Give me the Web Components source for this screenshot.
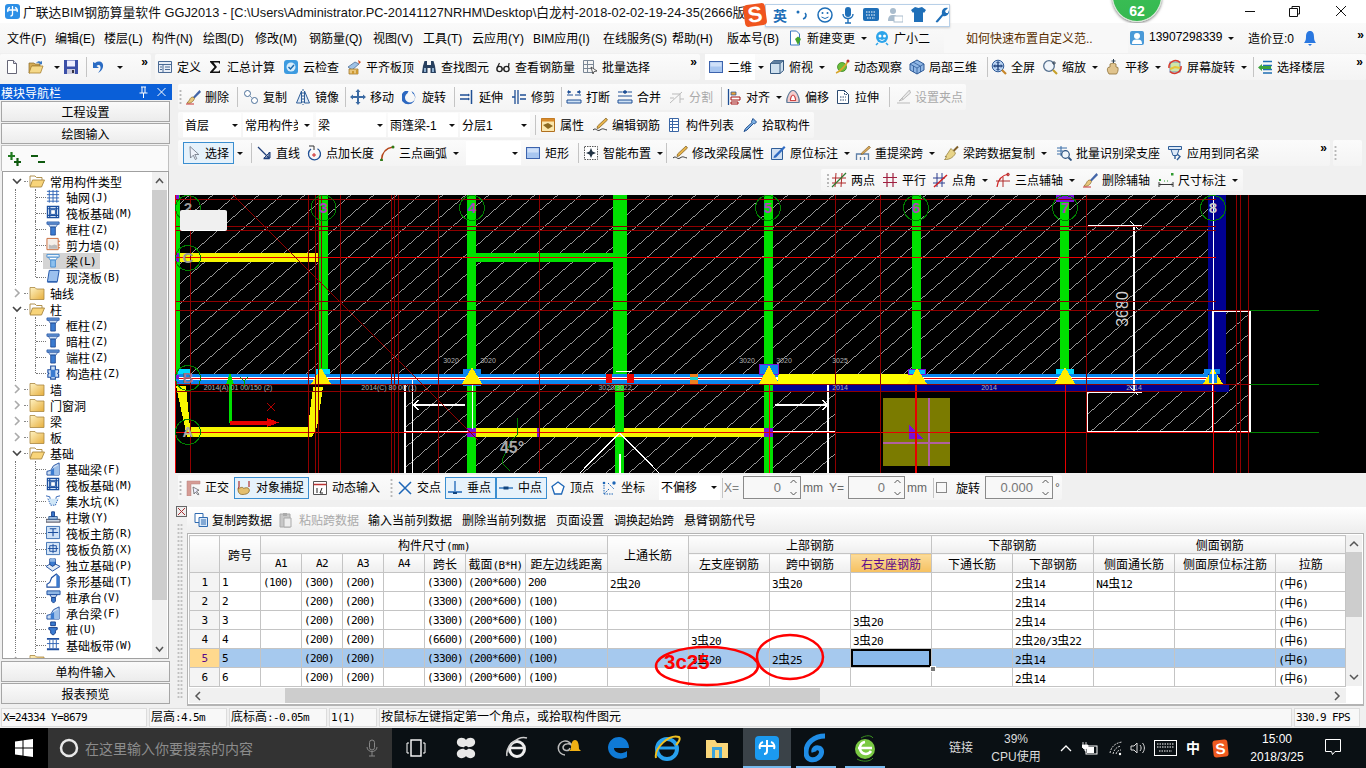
<!DOCTYPE html>
<html lang="zh">
<head>
<meta charset="utf-8">
<title>GGJ2013</title>
<style>
html, body { margin: 0; padding: 0; background: #f0f0f0; overflow: hidden; }
</style>
</head>
<body>
<gl-app>
    <gl-titlebar></gl-titlebar>
    <gl-menubar></gl-menubar>
    <gl-row gap="4" h="26" mt="1">
        <gl-toolbar w="151" pl="4">
            <gl-tool icon="new" w="24"></gl-tool>
            <gl-tool icon="open" w="35" arrow></gl-tool>
            <gl-tool icon="save" w="18"></gl-tool>
            <gl-sep w="10"></gl-sep>
            <gl-tool icon="undo" w="34" arrow></gl-tool>
            <gl-more></gl-more>
        </gl-toolbar>
        <gl-toolbar w="545" pl="2">
            <gl-tool icon="define" w="50">定义</gl-tool>
            <gl-tool icon="sigma" w="76">汇总计算</gl-tool>
            <gl-tool icon="cloud" w="63">云检查</gl-tool>
            <gl-tool icon="level" w="75">平齐板顶</gl-tool>
            <gl-tool icon="binoc" w="74">查找图元</gl-tool>
            <gl-tool icon="glasses" w="87">查看钢筋量</gl-tool>
            <gl-tool icon="batch" w="70">批量选择</gl-tool>
            <gl-more></gl-more>
        </gl-toolbar>
        <gl-toolbar w="661" pl="0" style="margin-left:1px">
            <gl-tool icon="square" w="50" white>二维</gl-tool>
            <gl-caret w="14"></gl-caret>
            <gl-tool icon="box" w="65" arrow>俯视</gl-tool>
            <gl-tool icon="orbit" w="75">动态观察</gl-tool>
            <gl-tool icon="cube" w="75">局部三维</gl-tool>
            <gl-sep w="7"></gl-sep>
            <gl-tool icon="zoomall" w="51">全屏</gl-tool>
            <gl-tool icon="zoom" w="63" arrow>缩放</gl-tool>
            <gl-tool icon="hand" w="62" arrow>平移</gl-tool>
            <gl-tool icon="spin" w="83" arrow>屏幕旋转</gl-tool>
            <gl-sep w="7"></gl-sep>
            <gl-tool icon="floors" w="70">选择楼层</gl-tool>
            <gl-more></gl-more>
        </gl-toolbar>
    </gl-row>
    <gl-work>
        <gl-nav slot="nav"></gl-nav>
        <gl-toolbar h="26" w="788" grip>
            <gl-tool icon="erase" w="47">删除</gl-tool>
            <gl-sep w="11"></gl-sep>
            <gl-tool icon="copy" w="52">复制</gl-tool>
            <gl-tool icon="mirror" w="46">镜像</gl-tool>
            <gl-sep w="9"></gl-sep>
            <gl-tool icon="move" w="52">移动</gl-tool>
            <gl-tool icon="rotate" w="48">旋转</gl-tool>
            <gl-sep w="9"></gl-sep>
            <gl-tool icon="extend" w="52">延伸</gl-tool>
            <gl-tool icon="trim" w="46">修剪</gl-tool>
            <gl-sep w="9"></gl-sep>
            <gl-tool icon="brk" w="51">打断</gl-tool>
            <gl-tool icon="merge" w="52">合并</gl-tool>
            <gl-tool icon="split" w="47" off>分割</gl-tool>
            <gl-sep w="10"></gl-sep>
            <gl-tool icon="align" w="59" arrow>对齐</gl-tool>
            <gl-tool icon="offset" w="50">偏移</gl-tool>
            <gl-tool icon="stretch" w="49">拉伸</gl-tool>
            <gl-sep w="11"></gl-sep>
            <gl-tool icon="grippt" w="70" off>设置夹点</gl-tool>
        </gl-toolbar>
        <gl-toolbar h="26" w="636" mt="2" pl="5">
            <gl-combo w="58">首层</gl-combo>
            <gl-combo w="70" ml="2">常用构件类型</gl-combo>
            <gl-combo w="70" ml="3">梁</gl-combo>
            <gl-combo w="70" ml="2">雨篷梁-1</gl-combo>
            <gl-combo w="70" ml="2">分层1</gl-combo>
            <gl-sep w="10"></gl-sep>
            <gl-tool icon="props" w="52">属性</gl-tool>
            <gl-tool icon="pencil" w="74">编辑钢筋</gl-tool>
            <gl-tool icon="list" w="76">构件列表</gl-tool>
            <gl-tool icon="dropper" w="70">拾取构件</gl-tool>
        </gl-toolbar>
        <gl-row h="26" mt="2">
            <gl-toolbar h="26" w="1152" pl="5">
                <gl-tool icon="cursor" w="51" on>选择</gl-tool>
                <gl-caret w="12"></gl-caret>
                <gl-sep w="10"></gl-sep>
                <gl-tool icon="line" w="50">直线</gl-tool>
                <gl-tool icon="ptlen" w="73">点加长度</gl-tool>
                <gl-tool icon="arc" w="87" arrow>三点画弧</gl-tool>
                <gl-combo w="55"></gl-combo>
                <gl-sep w="4" blank></gl-sep>
                <gl-tool icon="square" w="48">矩形</gl-tool>
                <gl-sep w="10"></gl-sep>
                <gl-tool icon="smart" w="78" arrow>智能布置</gl-tool>
                <gl-sep w="11"></gl-sep>
                <gl-tool icon="pencil" w="98">修改梁段属性</gl-tool>
                <gl-tool icon="note" w="85" arrow>原位标注</gl-tool>
                <gl-tool icon="respan" w="88" arrow>重提梁跨</gl-tool>
                <gl-tool icon="broom" w="113" arrow>梁跨数据复制</gl-tool>
                <gl-tool icon="detect" w="111">批量识别梁支座</gl-tool>
                <gl-tool icon="apply" w="92">应用到同名梁</gl-tool>
                <gl-more></gl-more>
            </gl-toolbar>
            <gl-toolbar h="26" w="29" ml="3" grip></gl-toolbar>
        </gl-row>
        <gl-toolbar h="22" w="422" mt="3" ml="643" grip="10">
            <gl-tool icon="axis2" w="51">两点</gl-tool>
            <gl-tool icon="axisp" w="50">平行</gl-tool>
            <gl-tool icon="axisa" w="63" arrow>点角</gl-tool>
            <gl-tool icon="axisc" w="87" arrow>三点辅轴</gl-tool>
            <gl-tool icon="erase" w="76">删除辅轴</gl-tool>
            <gl-tool icon="dim" w="84" arrow>尺寸标注</gl-tool>
        </gl-toolbar>
        <gl-canvas></gl-canvas>
        <gl-toolbar h="25" w="884" mt="2" grip>
            <gl-tool icon="ortho" w="49">正交</gl-tool>
            <gl-tool icon="snap" w="75" on>对象捕捉</gl-tool>
            <gl-sep w="3" blank></gl-sep>
            <gl-tool icon="dyn" w="73">动态输入</gl-tool>
            <gl-sep w="12" dots></gl-sep>
            <gl-tool icon="cross" w="48">交点</gl-tool>
            <gl-tool icon="perp" w="51" on>垂点</gl-tool>
            <gl-tool icon="midp" w="51" on>中点</gl-tool>
            <gl-sep w="3" blank></gl-sep>
            <gl-tool icon="vertex" w="51">顶点</gl-tool>
            <gl-tool icon="coord" w="50">坐标</gl-tool>
            <gl-combo w="61" ml="8">不偏移</gl-combo>
            <gl-sep w="4"></gl-sep>
            <gl-label c="#808080" w="19">X=</gl-label>
            <gl-spin w="58">0</gl-spin>
            <gl-label c="#666" w="28" pl="2">mm</gl-label>
            <gl-label c="#666" w="19">Y=</gl-label>
            <gl-spin w="57">0</gl-spin>
            <gl-label c="#666" w="25" pl="2">mm</gl-label>
            <gl-sep w="6"></gl-sep>
            <gl-check></gl-check>
            <gl-label w="37" pl="9">旋转</gl-label>
            <gl-spin w="68" ml="1">0.000</gl-spin>
            <gl-label c="#555" w="8" pl="2">°</gl-label>
        </gl-toolbar>
        <gl-panel></gl-panel>
    </gl-work>
    <gl-statusbar></gl-statusbar>
    <gl-taskbar></gl-taskbar>
</gl-app>
<script>
const ICONS = {
    new: `<path d="M3.5 1.5h6l3 3v10h-9z" fill="#fff" stroke="#667"/><path d="M9.5 1.5v3h3" fill="#dde" stroke="#667"/>`,
    open: `<path d="M1 4h5l1 1h5v2H4l-2 7H1z" fill="#d4ab55" stroke="#8a6a2a" stroke-width=".7"/><path d="M3.5 7H15l-2.5 7H1z" fill="#f5d98a" stroke="#a8802f" stroke-width=".8"/><path d="M8 4c1.500-2 3.500-2.400 5-1.200l1-1v3.400h-3.200l1-1C11 3.500 9.500 3.500 8 4z" fill="#3a78c2"/>`,
    save: `<path d="M1 1h14v14H1z" fill="#3b4fa8"/><path d="M4 1.500h8v6H4z" fill="#eef"/><path d="M4 10h8v5H4z" fill="#ccd"/><path d="M9 11h2v3H9z" fill="#334"/>`,
    undo: `<path d="M4 4c4-3 9-1 8 4-.6 3-3 5-5 6 1.500-2 3-4 2.500-6C9 5.500 7 5.500 5.500 7L8 9H2V3z" fill="#2b6cc4"/>`,
    define: `<path d="M1.500 2.500h13v11h-13z" fill="#e8eef7" stroke="#4a6a95"/><path d="M1.500 5.500h13M6 5.500v8M3 8h2M3 10.500h2M8 8h5M8 10.500h5" stroke="#4a6a95" fill="none"/>`,
    sigma: `<path d="M3 2h10v3l-1.500-1.500H6.500L10 8l-4 4.500h5.500L13 11v3H3v-1l4.500-5L3 3z" fill="#111"/>`,
    cloud: `<rect x="1" y="1" width="14" height="14" rx="3" fill="#3d9be0"/><circle cx="8" cy="8" r="4.500" fill="#d6ecfb"/><path d="M5.500 8l2 2 3.500-4" stroke="#1c6bb0" stroke-width="1.500" fill="none"/>`,
    level: `<path d="M2 8l7-5 4 2-7 6z" fill="#9fc2e6" stroke="#40628c" stroke-width=".7"/><path d="M3 10h9v5H3z" fill="#e9c57a" stroke="#9a6b1a" stroke-width=".7"/><path d="M6 12h2v3H6zM10 11h2v4h-2z" fill="#c93"/><path d="M12 1l3 2-2 2z" fill="#d64a1e"/>`,
    binoc: `<path d="M2 7l1.500-5h2.500v4h4V2h2.500L14 7l1 7H9.500V9h-3v5H1z" fill="#28405f"/><path d="M3 9h2v4H3zM11 9h2v4h-2z" fill="#8fb0d0"/>`,
    glasses: `<circle cx="4.500" cy="10" r="2.600" fill="none" stroke="#222" stroke-width="1.400"/><circle cx="11.500" cy="10" r="2.600" fill="none" stroke="#222" stroke-width="1.400"/><path d="M7 10h2M2.500 8l2-4M13.500 8l.5-4" stroke="#222" stroke-width="1.200" fill="none"/>`,
    batch: `<path d="M1.500 1.500h10v12h-10zM1.500 5.500h10M1.500 9.500h10M5.500 1.500v12" fill="#f5f5f5" stroke="#7a8796"/><path d="M9 8l6 4-3 .5L11 15z" fill="#fff" stroke="#333" stroke-width=".8"/>`,
    square: `<rect x="1.500" y="2.500" width="13" height="11" fill="#a8c6f0" stroke="#3c63ad"/><rect x="2.500" y="3.500" width="11" height="4" fill="#cfe0f8"/>`,
    box: `<path d="M5 1.500h9.500v10L11 14.500H1.500v-10z" fill="#cfe0ee" stroke="#35587f"/><path d="M1.500 4.500H11v10M11 4.500l3.500-3" fill="none" stroke="#35587f"/><path d="M5 1.500h9.500L11 4.500H1.500z" fill="#5f7f9f"/>`,
    orbit: `<circle cx="8" cy="8" r="4.500" fill="#6bbf3a" stroke="#2f7a16" stroke-width=".7"/><path d="M2 14C5 13 12 7 14 2" stroke="#d8a62a" stroke-width="1.800" fill="none"/><circle cx="14" cy="2" r="1.500" fill="#b33"/>`,
    cube: `<path d="M8 1l7 4v6l-7 4-7-4V5z" fill="#8fb6e4" stroke="#2f5b98"/><path d="M1 5l7 4 7-4M8 9v6M4 3l7 4M4.500 7v6M11.500 7v6" stroke="#2f5b98" fill="none" stroke-width=".8"/>`,
    zoomall: `<circle cx="7" cy="7" r="5.800" fill="#b9d3f2" stroke="#2f5b98"/><path d="M7 3v8M3 7h8" stroke="#1c3f7a" stroke-width="1.300"/><path d="M5.500 4L7 2.500 8.500 4M5.500 10L7 11.500 8.500 10M4 5.500L2.500 7 4 8.500M10 5.500L11.500 7 10 8.500" fill="none" stroke="#1c3f7a"/><path d="M11 11l4 4" stroke="#c6862a" stroke-width="2.200"/>`,
    zoom: `<circle cx="7" cy="7" r="5.300" fill="#f0f5fb" stroke="#55708f" stroke-width="1.300"/><path d="M11 11l4 4" stroke="#c6a02a" stroke-width="2.200"/><path d="M12 2v4M10 4h4" stroke="#345" stroke-width=".9"/>`,
    hand: `<path d="M4 15C2 12 2 10 3 8.500l2-.5V5l1.500-.5L8 4l1.500.5L11 5v3l2 .5c.5 3-.5 5-1.500 6.500z" fill="#e0c48e" stroke="#8f7137" stroke-width=".8"/><path d="M8.500 0v4M6.500 2h4" stroke="#345" stroke-width="1"/>`,
    spin: `<rect x="3" y="3" width="10" height="10" fill="#cfe6a8" stroke="#6a8fbf"/><path d="M3 10l5-2 5 1" stroke="#e8c43a" stroke-width="2" fill="none"/><path d="M2 9A6.500 6.500 0 0 1 13 3.500M14 7a6.500 6.500 0 0 1-11 5.500" fill="none" stroke="#d83b2b" stroke-width="1.500"/>`,
    floors: `<path d="M6 2.500h9M6 6.500h9M6 10.500h9M6 14h9" stroke="#1f6fb3" stroke-width="1.700"/><path d="M1 8.500L5 5v2h9v3H5v2z" fill="#3ca33c"/>`,
    erase: `<path d="M14.500 1L8 8l1.500 1.500L16 3z" fill="#4466a8"/><path d="M8 8c-1.500 0-3 1-3.500 3L2 14c3 .7 6-.5 7.500-4.500z" fill="#e9c77c" stroke="#8a6a2a" stroke-width=".7"/><path d="M1 15h8" stroke="#c33" stroke-width="1"/>`,
    copy: `<circle cx="4.500" cy="4.500" r="3" fill="#fff" stroke="#4b6f99"/><circle cx="11.500" cy="11.500" r="3" fill="#fff" stroke="#4b6f99"/><path d="M7 7l2 2" stroke="#4b6f99" stroke-dasharray="1 1"/>`,
    mirror: `<path d="M6.500 2v12h-5zM9.500 2v12h5z" fill="#dfeaf7" stroke="#2f5e98"/><path d="M8 0v16" stroke="#2f5e98" stroke-dasharray="2 1"/>`,
    move: `<path d="M8 0l2.500 3H9v4h4V5.500L16 8l-3 2.500V9H9v4h1.500L8 16l-2.500-3H7V9H3v1.500L0 8l3-2.500V7h4V3H5.500z" fill="#3b6aa3"/>`,
    rotate: `<path d="M3 2h3.500l-1 2.200a5 5 0 1 0 5 0L9.500 2A7 7 0 1 1 3 2z" fill="#2d68c0"/>`,
    extend: `<path d="M12.500 1v14M1 6h8M1 10h8" stroke="#1f4f95" stroke-width="1.500" fill="none"/><path d="M9 4.500l2 1.500-2 1.500zM9 8.500l2 1.500-2 1.500z" fill="#1f4f95"/>`,
    trim: `<path d="M4 1v14M7 1v14M1 8h3M9 6h6M9 10h6" stroke="#1f4f95" stroke-width="1.300" fill="none"/>`,
    brk: `<path d="M1 11h14v3H1zM1 6h6M9 6h6" fill="#cfe2f5" stroke="#1f4f95"/><path d="M5 3L2 1v4zM11 3l3-2v4z" fill="#1f4f95"/><path d="M1 3h4M11 3h4" stroke="#1f4f95"/>`,
    merge: `<path d="M1 11h14v3H1z" fill="#cfe2f5" stroke="#1f4f95"/><path d="M1 7h14" stroke="#1f4f95"/><path d="M5 3L8 5V1zM11 3L8 5V1z" fill="#1f4f95"/><path d="M1 3h4M11 3h4" stroke="#1f4f95"/>`,
    split: `<path d="M1 14L13 3M3 5h8v9M1 9h4M11 10h4" stroke="#bbb" fill="none"/>`,
    align: `<path d="M2.500 0v16" stroke="#1f4f95" stroke-width="1.300"/><path d="M5 3h5v3H5z" fill="#e8a33a" stroke="#1f4f95" stroke-width=".7"/><path d="M5 8h9v3H5zM5 13h7v2H5z" fill="#fff" stroke="#a01010"/>`,
    offset: `<path d="M8 1.500c4 0 7 9 6 12H2c-1-3 2-12 6-12z" fill="#f4cdcd" stroke="#5d7c99" stroke-width="1.200"/><path d="M8 6c1.500 0 3 4 2.500 5.500h-5C5 10 6.500 6 8 6z" fill="#fff" stroke="#c44" stroke-width="1.200"/>`,
    stretch: `<path d="M2.500 1.500h7l4 4v9h-11z" fill="#fff" stroke="#2c4a70" /><path d="M9.500 1.500v4h4M5 8h6M5 11h6" fill="none" stroke="#2c4a70" stroke-dasharray="1.500 1"/>`,
    grippt: `<path d="M2 14h13M14.500 1L7 9l1 1.500L15.500 4zM7 9l-3 3 4-1.500" stroke="#bbb" fill="#e8e8e8"/>`,
    props: `<path d="M1.500 1.500h13v13h-13z" fill="#fbe7ae" stroke="#b06f1e"/><path d="M1.500 1.500h13v3h-13z" fill="#d98b2b"/><path d="M3 8l5-2 5 3-5 3z" fill="#8d6a22"/>`,
    pencil: `<path d="M14 1l1.500 2L7 11 5 11.500 5.500 9z" fill="#e7b34a" stroke="#7a5a20" stroke-width=".7"/><path d="M1 13c3-3 4 2 7 0s3-1 7 0" stroke="#333" fill="none"/>`,
    list: `<path d="M3.500 1.500h9v13h-9z" fill="#fff" stroke="#3a66a5"/><path d="M3.500 4.500h9M3.500 7.500h9M3.500 10.500h9M6.500 1.500v13" stroke="#3a66a5"/>`,
    dropper: `<path d="M11 1.500l3.500 3.500-2 2-1-.5L5 13l-3 1.500L3.500 11.500 10 5.500 9.500 4.500z" fill="#7db1e4" stroke="#214f8f"/>`,
    cursor: `<path d="M5 1.500L5.500 13l2.800-2.800 2 4.300 1.500-.8-2-4.200h4z" fill="#eef3fb" stroke="#6b7280" stroke-width=".8"/>`,
    line: `<path d="M2 2l11 11" stroke="#1f3f7a" stroke-width="1.300"/><path d="M8 13h6V7z" fill="none" stroke="#1f3f7a"/><path d="M13 7.500v6H7.500" stroke="#1f3f7a" fill="none" stroke-width="1.300"/>`,
    ptlen: `<path d="M5 4a6 6 0 1 0 6.500-.3" fill="none" stroke="#1f4f95" stroke-width="1.300"/><path d="M3 1h5v4" fill="none" stroke="#333"/><path d="M8 8v4M6 10h4" stroke="#c22"/>`,
    arc: `<path d="M2.500 15C3 8 7 3 14 2" fill="none" stroke="#b5461a" stroke-width="1.500"/><circle cx="14" cy="2" r="1.500" fill="#2f7a16"/><circle cx="2.500" cy="15" r="1.500" fill="#2f7a16"/>`,
    smart: `<path d="M1.500 1.500h13v13h-13z" fill="#fff" stroke="#555" stroke-dasharray="1.500 1"/><path d="M8 3l1.500 3.500L13 8l-3.500 1.500L8 13l-1.500-3.500L3 8l3.500-1.500z" fill="#234"/>`,
    note: `<path d="M1.500 3.500h11v11h-11z" fill="#cfdff2" stroke="#2f5e98"/><path d="M4 11L14 1l1.500 1.500L6 12.500l-2.500.5z" fill="#2f6bc2"/>`,
    respan: `<path d="M1.500 15V9h12v6M5.500 15v-3M9.500 15v-3" fill="none" stroke="#5d7fa8" stroke-width="1.300"/><path d="M14 1l1.500 1.500L8 9 6 9.500 6.500 8z" fill="#d8a75a" stroke="#7a5a20" stroke-width=".6"/>`,
    broom: `<path d="M10.500 6L15 1.500" stroke="#7f5f2a" stroke-width="2"/><path d="M8 3.500l4.500 4.500c-1 3-5 7-11 6.500 1-1 2-2 2-3l-1.500.5C4 10 6 6 8 3.500z" fill="#e8d488" stroke="#8a7430" stroke-width=".7"/>`,
    detect: `<path d="M1 3h10M1 6h6M1 9h5M5 1v10" stroke="#3b6fa8"/><circle cx="9.500" cy="9.500" r="3.800" fill="#eef5fb" stroke="#28507f" stroke-width="1.200"/><path d="M12.500 12.500l3 3" stroke="#28507f" stroke-width="1.800"/>`,
    apply: `<path d="M1.500 1.500h13v3h-13zM4 4.500l2 6h4l2-6" fill="#dbe8f7" stroke="#2f5e98"/><path d="M10 9l3 2.500L10 15M8 10v4" fill="none" stroke="#2f5e98" stroke-width="1.400"/>`,
    axis2: `<path d="M1 6h14M1 11h14M5 1l-1 14M11 1l-1 14" stroke="#b02a2a" fill="none"/><path d="M1 15L15 1" stroke="#2f7a2f" stroke-width="1.200"/>`,
    axisp: `<path d="M1 5.500h14M1 10.500h14M5 1v14M11 1v14" stroke="#a02040" stroke-width="1.200" fill="none"/>`,
    axisa: `<path d="M1 6h12M1 11h12M5 1v14M10 1v14" stroke="#2c3e8f" fill="none"/><path d="M2 15L15 3" stroke="#d02020" stroke-width="1.500"/>`,
    axisc: `<path d="M2 15C3 7 7 3 14 2" fill="none" stroke="#d02020" stroke-width="1.200"/><path d="M1 9h14M8 5v10" stroke="#b02a2a"/><circle cx="13" cy="2.500" r="1.300" fill="none" stroke="#b02a2a"/>`,
    dim: `<path d="M1 10v5M15 10v5M1 12.500h14" stroke="#333" fill="none"/><path d="M1 12.500l2-1v2zM15 12.500l-2-1v2z" fill="#333"/><rect x="1" y="7" width="2" height="2" fill="#2f9a2f"/><rect x="13" y="1" width="2.500" height="2.500" fill="#2f9a2f"/><path d="M6 9h1M9 9h1" stroke="#2f9a2f"/>`,
    ortho: `<path d="M2 1h13v3H6v12H2z" fill="#d69c95" stroke="#b5827c" stroke-width=".5"/><path d="M8 7l1 7 1.500-2 2.500 3 1-.8-2.500-3 2.500-1z" fill="#eef" stroke="#555" stroke-width=".7"/>`,
    snap: `<path d="M3 1v6M3 7l-1 2M13 1v6" stroke="#b03030" stroke-width="1.200"/><path d="M2 9c3-2 5-2 5-1s3-1 5 0 2 5-2 6-8 1-8-5z" fill="#e4bf6e" stroke="#8a6a2a" stroke-width=".8"/>`,
    dyn: `<path d="M1.500 1.500h13v13h-13z" fill="#fff" stroke="#555"/><path d="M1.500 4.500h13" stroke="#b33" stroke-width="1.500"/><path d="M5 8v5M10 8l-2 5h3" stroke="#222" fill="none"/>`,
    cross: `<path d="M2 2l12 12M14 2L2 14" stroke="#1d66b7" stroke-width="1.500"/>`,
    perp: `<path d="M8 1v10M1 12h14" stroke="#1d66b7" stroke-width="1.300"/><path d="M6 12h4v2H6z" fill="#11457f"/>`,
    midp: `<path d="M1 8h14" stroke="#1d66b7" stroke-width="1.300"/><path d="M5.500 6.500h5v3h-5z" fill="#11457f"/>`,
    vertex: `<path d="M8 2l6 4.500-2.500 7.500h-7L2 6.500z" fill="#fff" stroke="#1d66b7" stroke-width="1.300"/>`,
    coord: `<path d="M3 14V3M3 14h10M8 9L3 14M7 3l6 6" stroke="#1d66b7" stroke-dasharray="1.500 1" fill="none"/><circle cx="13" cy="3" r="1.700" fill="#1d66b7"/><circle cx="3" cy="3" r="1.300" fill="#1d66b7"/>`,
    pastex: `<path d="M3 2h10v13H3z" fill="#c8c8c8" stroke="#aaa"/><path d="M6 1h4v3H6z" fill="#aaa"/><path d="M7 6h7v9H7z" fill="#eee" stroke="#aaa"/>`,
    copyx: `<path d="M2 1.500h8v9H2z" fill="#fff" stroke="#2f6ab0"/><path d="M6 5.500h8.500v9H6z" fill="#d9e8f8" stroke="#2f6ab0"/><path d="M8 8h5M8 10h5M8 12h5" stroke="#2f6ab0"/>`,
    plusplus: `<path d="M4.500 1v8M1 5h7" stroke="#207a20" stroke-width="2.200"/><path d="M10.500 7v8M7 11h7" stroke="#0f5a0f" stroke-width="2.200"/>`,
    minusminus: `<path d="M1 5h7M8 11h7" stroke="#0f5a0f" stroke-width="2.200"/>`,
    grid: `<path d="M1 2.500h13M1 6h13M1 9.500h13M1 13h13M3.500 1v13.500M7.500 1v13.500M11.500 1v13.500" stroke="#2f63b5" fill="none"/>`,
    raft: `<path d="M1.500 1.500h12v12h-12zM4 1.500v12M11 1.500v12M1.500 4h12M1.500 11h12" fill="#cfe0f5" stroke="#1b4f9f" stroke-width="1.300"/><path d="M5 5h5v5H5z" fill="#fff" stroke="#1b4f9f"/>`,
    col: `<path d="M1 1h13v2.500H1z" fill="#6a9bd8" stroke="#1f4fa0" stroke-width=".8"/><path d="M2.500 3.500h10L10.500 6.500h-6z" fill="#cfe0f5" stroke="#1f4fa0" stroke-width=".8"/><path d="M5 6.500h5V15H5z" fill="#3b7bd0" stroke="#163f8a" stroke-width=".8"/>`,
    wall: `<path d="M1 1.500h12v12H1z" fill="#f5efe9" stroke="#c86a3a"/><path d="M3 8l3 1 3-1 3 1v3.500H3z" fill="#bbb"/><path d="M14 4v1M14 8v1M14 11v1" stroke="#c86a3a" stroke-width="2"/>`,
    beam: `<path d="M1 1.500h13v3H1z" fill="#eaf3fb" stroke="#4a8ed0"/><path d="M2.500 4.500h10l-2 3h-6z" fill="#fff" stroke="#4a8ed0"/><path d="M5 7.500h5V15H5z" fill="#8cc0ee" stroke="#4a8ed0"/>`,
    slab: `<path d="M3.500 1.500h10.500l-2 12H1.500z" fill="#9cc1ee" stroke="#1c52a8"/><path d="M1.500 13.500h10.500v1H1.500z" fill="#1c52a8"/>`,
    gzz: `<path d="M5 1h5v4h3.500v3l-1 1 1 1v3H10v2H5v-2H2v-3l1-1-1-1V5h3z" fill="#cfe0f5" stroke="#1f4fa0" stroke-width="1.200"/><path d="M5 5h5v8H5z" fill="#3b7bd0"/>`,
    jcl: `<path d="M1 15V11l4-1 3-5 6-3v13z" fill="#cfe0f5" stroke="#1f4fa0"/><path d="M5 10l4-3v8H5z" fill="#3b7bd0"/><path d="M9 7l5-3v11H9z" fill="#9dbfe8"/>`,
    pit: `<path d="M0 3l4 1 1 5h5l1-5 4-1" fill="none" stroke="#2f63b5"/><path d="M2 6l3 7h5l3-7" fill="#cfe6f7" stroke="#2f63b5" stroke-dasharray="1.500 1"/>`,
    pier: `<path d="M0 11h15v3H0z" fill="#cdd7e3" stroke="#445"/><path d="M3 8h9v3H3z" fill="#9cbce0" stroke="#345f95"/><path d="M6 3h3v5H6z" fill="#3b7bd0" stroke="#163f8a"/>`,
    rmain: `<path d="M.5 1.500h14v13H.5z" fill="#cfe2f7" stroke="#3c6fb0"/><path d="M2 8h11M7.500 4v8M4 4h7" stroke="#1b4f9f" fill="none" stroke-width="1.200"/>`,
    rneg: `<path d="M.5 1.500h14v13H.5z" fill="#d6e6f8" stroke="#3c6fb0"/><path d="M2 8h11M7.500 3v10M4 5h7v6H4z" stroke="#1b4f9f" fill="none"/>`,
    iso: `<path d="M0 10l7-4 8 4-8 5z" fill="#e4ecf6" stroke="#1f4fa0"/><path d="M4 2h6v6l-3 2-3-2z" fill="#3b7bd0" stroke="#163f8a"/><path d="M4 2l3-1 3 1v3H4z" fill="#8fb6e4"/>`,
    strip: `<path d="M1 15v-3l3-2 2-5 5-4 3 3v11z" fill="#fff" stroke="#1f4fa0" stroke-width="1.200"/><path d="M11 1l3 3v11h-3z" fill="#3b7bd0"/>`,
    cap: `<path d="M1 2h14v4H1z" fill="#8fb6e4" stroke="#1f4fa0"/><path d="M4 6h8l-2 3H6z" fill="#cfe0f5" stroke="#1f4fa0"/><path d="M6 9h4v4l-2 2-2-2z" fill="#3b7bd0" stroke="#163f8a"/>`,
    pile: `<path d="M5 1h5v4H5zM3 7h9v2l-2 1v3l-2.500 2L5 13v-3L3 9z" fill="#3b7bd0" stroke="#163f8a"/>`,
    band: `<path d="M1 2h13M1 13h13" stroke="#1f4fa0" stroke-width="2"/><path d="M4 3v9M7.500 3v9M11 3v9M1 7h13" stroke="#2f63b5" fill="none"/>`,
    folder: `<path d="M1 4V2.500h5L7.500 4H15v10.500H1z" fill="url(#fy)" stroke="#a88740" stroke-width=".8"/><defs><linearGradient id="fy" x1="0" x2="1" y1="0" y2="1"><stop offset="0" stop-color="#fff3c4"/><stop offset="1" stop-color="#e6ae3c"/></linearGradient></defs>`,
    folderopen: `<path d="M1 13V3h5l1.500 1.500H13V7" fill="#fff" stroke="#a88740" stroke-width=".9"/><path d="M3.500 7H15.500l-3 7H1z" fill="#f8d479" stroke="#a88740" stroke-width=".9"/>`,
    phone: `<rect x="1" y="1" width="14" height="14" rx="2" fill="#4a9ad8"/><circle cx="8" cy="6" r="3" fill="#fff"/><path d="M3 14c0-4 2-4.500 5-4.500s5 .5 5 4.500z" fill="#fff"/>`,
    bell: `<path d="M8 1c3 0 4 2.500 4 6s1 4.500 2 6H2c1-1.500 2-2.500 2-6s1-6 4-6z" fill="#2a78e0"/><path d="M6 14h4l-2 2z" fill="#2a78e0"/>`,
    newchange: `<path d="M3.500 1h6l3 3v11h-9z" fill="#fff" stroke="#3a78c2"/><path d="M8 9l3-2.500L14 9l-3 6z" fill="#45a52e"/>`,
    xiaoer: `<circle cx="8" cy="7" r="6" fill="#2ca4ea"/><circle cx="6" cy="6" r="1.500" fill="#fff"/><circle cx="10.500" cy="6" r="1.500" fill="#fff"/><path d="M4 13l-2 2M12 13l2 2" stroke="#2ca4ea" stroke-width="1.500"/><path d="M5.500 9.500q2.500 2 5 0" stroke="#fff" fill="none"/>`
};

class GlIcon extends HTMLElement {
    connectedCallback() {
        this.root = this.attachShadow({ mode: "open" });
        let size = this.getAttribute("size") || 16;
        this.root.innerHTML = `
<style>
:host { display: inline-flex; flex: none; }
svg { display: block; }
</style>
<svg width="${size}" height="${size}" viewBox="0 0 16 16">${ICONS[this.getAttribute("name")] || ""}</svg>`;
    }
}
window.customElements.define("gl-icon", GlIcon);

class GlApp extends HTMLElement {
    connectedCallback() {
        this.root = this.attachShadow({ mode: "open" });
        this.root.innerHTML = `
<style>
:host {
    display: block;
    position: relative;
    width: 1366px;
    height: 768px;
    overflow: hidden;
    background: #f0f0f0;
    color: #000;
    font: 12px "Liberation Sans", "Noto Sans CJK SC", sans-serif;
}
</style>
<slot></slot>`;
    }
}
window.customElements.define("gl-app", GlApp);

class GlTitlebar extends HTMLElement {
    connectedCallback() {
        this.root = this.attachShadow({ mode: "open" });
        this.root.innerHTML = `
<style>
:host { display: flex; align-items: center; height: 23px; background: #fff; position: relative; font-size: 12.800px; }
.logo { margin: 0 3px 0 5px; }
.title { white-space: nowrap; overflow: hidden; width: 726px; color: #111; }
.ball {
    position: absolute; left: 1112px; top: -30px; width: 48px; height: 48px; border-radius: 50%;
    background: linear-gradient(#3dc25a, #35b84f); border: 1px solid #d8e8d8; box-shadow: 0 1px 3px #777;
    color: #fff; font: bold 14px "Liberation Sans", sans-serif; display: flex; align-items: flex-end; justify-content: center; padding-bottom: 2px; box-sizing: content-box;
}
.win { position: absolute; top: 0; height: 23px; display: flex; align-items: center; }
.sogou {
    position: absolute; left: 744px; top: 3px; height: 24px; width: 206px; z-index: 3;
    display: flex; align-items: center;
}
.s {
    position: relative; width: 22px; height: 22px; background: #f0551e; border-radius: 4px;
    color: #fff; font: bold 22px "Liberation Sans", sans-serif; text-align: center; line-height: 22px; z-index: 1; transform: rotate(-8deg);
}
.sb {
    margin-left: -1px; flex: 1; height: 23px; background: #fff; border: 1px solid #b8d0e8; box-shadow: 0 1px 2px #ccc;
    display: flex; align-items: center; gap: 8px; padding-left: 7px; box-sizing: border-box;
}
.ying { color: #1f6fb8; font-weight: bold; font-size: 14px; }
</style>
<svg class="logo" width="15" height="15" viewBox="0 0 15 15"><rect width="15" height="15" rx="3" fill="#2d8fe6"/><path d="M7.500 2v8a2 2 0 0 1-2 2M3 6h9M5 3.500C3 4 2 6 3 8M10 3.500c2 .5 3 2.500 2 4.500" stroke="#fff" stroke-width="1.300" fill="none"/></svg>
<div class="title">广联达BIM钢筋算量软件 GGJ2013 - [C:\\Users\\Administrator.PC-20141127NRHM\\Desktop\\白龙村-2018-02-02-19-24-35(2666版</div>
<div class="sogou">
    <div class="s">S</div>
    <div class="sb">
        <span class="ying">英</span>
        <svg width="14" height="16" viewBox="0 0 14 16"><circle cx="3" cy="5" r="1.500" fill="#1f6fb8"/><path d="M10 6c2 2 1 5-2 6" stroke="#1f6fb8" stroke-width="1.600" fill="none"/></svg>
        <svg width="16" height="16" viewBox="0 0 16 16"><circle cx="8" cy="8" r="7" fill="none" stroke="#1f6fb8" stroke-width="1.500"/><circle cx="5.500" cy="6" r="1" fill="#1f6fb8"/><circle cx="10.500" cy="6" r="1" fill="#1f6fb8"/><path d="M4.500 10q3.500 3 7 0" stroke="#1f6fb8" fill="none"/></svg>
        <svg width="14" height="18" viewBox="0 0 14 18"><rect x="4" y="1" width="6" height="10" rx="3" fill="#1f6fb8"/><path d="M2 8c0 6 10 6 10 0M7 13v4M4 17h6" stroke="#1f6fb8" stroke-width="1.400" fill="none"/></svg>
        <svg width="16" height="14" viewBox="0 0 16 14"><rect width="16" height="13" rx="2" fill="#1f6fb8"/><path d="M3 4h10M3 7h10M4 10h8" stroke="#fff" stroke-dasharray="1.500 1"/></svg>
        <svg width="16" height="16" viewBox="0 0 16 16"><circle cx="6" cy="4" r="3" fill="#a9bccd"/><path d="M1 14c0-5 2-6 5-6s5 1 5 6z" fill="#a9bccd"/><rect x="7" y="9" width="9" height="6" fill="#fff" stroke="#a9bccd"/></svg>
        <svg width="15" height="16" viewBox="0 0 15 16"><path d="M4 0l3.500 1L11 0l4 3-2 3-1-1v10H3V5L2 6 0 3z" fill="#1f6fb8"/></svg>
        <svg width="15" height="16" viewBox="0 0 15 16"><path d="M2 14L8 7C7 3 10 0 14 1l-3 3 1 2 2 0 1-3c1 4-3 7-6 6l-5 6c-1 1-3 0-2-1z" fill="#1f6fb8"/></svg>
    </div>
</div>
<div class="ball">62</div>
<svg class="win" style="left:1244px" width="12" height="23"><path d="M1 11.500h10" stroke="#111"/></svg>
<svg class="win" style="left:1289px" width="12" height="23"><path d="M.5 8.500h8v8h-8zM3 8V6.500h7.500V14H9" fill="none" stroke="#111"/></svg>
<svg class="win" style="left:1335px" width="12" height="23"><path d="M1 6l10 10M11 6L1 16" stroke="#111"/></svg>`;
    }
}
window.customElements.define("gl-titlebar", GlTitlebar);

class GlMenubar extends HTMLElement {
    connectedCallback() {
        this.root = this.attachShadow({ mode: "open" });
        let items = [["文件(F)", 48], ["编辑(E)", 49], ["楼层(L)", 48], ["构件(N)", 51], ["绘图(D)", 52], ["修改(M)", 54], ["钢筋量(Q)", 64],
            ["视图(V)", 50], ["工具(T)", 49], ["云应用(Y)", 61], ["BIM应用(I)", 70], ["在线服务(S)", 69], ["帮助(H)", 55], ["版本号(B)", 60]];
        this.root.innerHTML = `
<style>
:host { display: flex; align-items: center; height: 30px; padding-left: 7px; background: linear-gradient(#fafafa, #f4f4f4); position: relative; white-space: nowrap; }
span.m { flex: none; margin-bottom: 2px; }
.b { color: #5b3000; width: 184px; flex: none; background: #f8f8f8; height: 100%; display: flex; align-items: center; padding: 0 0 2px 22px; box-sizing: border-box; }
.more { position: absolute; right: 2px; top: 5px; font: bold 12px "Liberation Sans", sans-serif; }
</style>
${items.map((i) => `<span class="m" style="width:${i[1]}px">${i[0]}</span>`).join("")}
<gl-tool icon="newchange" w="87" arrow>新建变更</gl-tool>
<gl-tool icon="xiaoer" w="70">广小二</gl-tool>
<div class="b">如何快速布置自定义范..</div>
<gl-tool icon="phone" w="119" arrow style="margin-left:1px">13907298339</gl-tool>
<span class="m" style="width:54px">造价豆:0</span>
<gl-icon name="bell"></gl-icon>
<span class="more">»</span>`;
    }
}
window.customElements.define("gl-menubar", GlMenubar);

class GlRow extends HTMLElement {
    connectedCallback() {
        this.root = this.attachShadow({ mode: "open" });
        this.root.innerHTML = `
<style>
:host { display: flex; flex: none; gap: ${this.getAttribute("gap") || 0}px; height: ${this.getAttribute("h")}px; margin-top: ${this.getAttribute("mt") || 0}px; }
</style>
<slot></slot>`;
    }
}
window.customElements.define("gl-row", GlRow);

class GlToolbar extends HTMLElement {
    connectedCallback() {
        this.root = this.attachShadow({ mode: "open" });
        let grip = this.getAttribute("grip");
        let gripWidth = grip !== null ? (parseInt(grip) || 7) : 0;
        this.root.innerHTML = `
<style>
:host {
    display: flex;
    align-items: center;
    flex: none;
    box-sizing: border-box;
    width: ${this.getAttribute("w")}px;
    height: ${this.getAttribute("h") || 26}px;
    margin-top: ${this.getAttribute("mt") || 0}px;
    margin-left: ${this.getAttribute("ml") || 0}px;
    padding-left: ${this.getAttribute("pl") || 0}px;
    background: linear-gradient(#fbfbfb, #f4f4f4);
    border-radius: 2px;
    white-space: nowrap;
}
.grip { flex: none; width: ${gripWidth}px; height: 60%; background: radial-gradient(circle, #b8b8b8 1px, transparent 1.200px) ${gripWidth > 7 ? 2 : -1}px 0 / 100% 4px; }
</style>
${grip !== null ? '<div class="grip"></div>' : ""}<slot></slot>`;
    }
}
window.customElements.define("gl-toolbar", GlToolbar);

class GlTool extends HTMLElement {
    connectedCallback() {
        this.root = this.attachShadow({ mode: "open" });
        let icon = this.getAttribute("icon");
        this.style.width = this.getAttribute("w") + "px";
        this.root.innerHTML = `
<style>
:host { display: inline-flex; align-items: center; gap: 4px; flex: none; height: 100%; box-sizing: border-box; }
:host([white]) { background: #fff; padding-left: 3px; }
:host([off]) { color: #aaa; }
:host([on]) { height: 22px; padding-left: 1px; border: 1px solid #3a8ed0; background: #e6f2fb; }
.lb { margin-bottom: 2px; }
.arr { width: 0; height: 0; margin-left: 2px; border: 3px solid transparent; border-top: 3px solid #111; border-bottom: 0; flex: none; }
</style>
${icon ? `<gl-icon name="${icon}"></gl-icon>` : ""}<span class="lb"><slot></slot></span>${this.hasAttribute("arrow") ? '<i class="arr"></i>' : ""}`;
    }
}
window.customElements.define("gl-tool", GlTool);

class GlSep extends HTMLElement {
    connectedCallback() {
        this.root = this.attachShadow({ mode: "open" });
        let dots = this.hasAttribute("dots");
        this.root.innerHTML = `
<style>
:host { display: flex; justify-content: center; align-items: center; flex: none; height: 100%; width: ${this.getAttribute("w")}px; }
b { display: block; height: 20px; width: ${dots ? 3 : 1}px; background: ${dots ? "radial-gradient(circle, #b8b8b8 1px, transparent 1.200px) 0 0 / 100% 4px" : "#c4c4c4"}; }
</style>
${this.hasAttribute("blank") ? "" : "<b></b>"}`;
    }
}
window.customElements.define("gl-sep", GlSep);

class GlCaret extends HTMLElement {
    connectedCallback() {
        this.root = this.attachShadow({ mode: "open" });
        this.root.innerHTML = `
<style>
:host { display: flex; align-items: center; justify-content: flex-start; flex: none; height: 100%; width: ${this.getAttribute("w")}px; padding-left: 3px; box-sizing: border-box; }
i { width: 0; height: 0; border: 3px solid transparent; border-top: 3px solid #111; border-bottom: 0; }
</style>
<i></i>`;
    }
}
window.customElements.define("gl-caret", GlCaret);

class GlMore extends HTMLElement {
    connectedCallback() {
        this.root = this.attachShadow({ mode: "open" });
        this.root.innerHTML = `
<style>
:host { margin-left: auto; padding-right: 3px; align-self: flex-start; font: bold 12px "Liberation Sans", sans-serif; line-height: 17px; }
</style>
»`;
    }
}
window.customElements.define("gl-more", GlMore);

class GlCombo extends HTMLElement {
    connectedCallback() {
        this.root = this.attachShadow({ mode: "open" });
        this.root.innerHTML = `
<style>
:host { display: flex; align-items: center; flex: none; box-sizing: border-box; width: ${this.getAttribute("w")}px; height: 24px; margin-left: ${this.getAttribute("ml") || 0}px; padding-left: 2px; background: #fff; }
div { flex: 1; overflow: hidden; white-space: nowrap; margin-bottom: 2px; }
i { flex: none; width: 0; height: 0; margin: 0 3px 0 6px; border: 3px solid transparent; border-top: 3px solid #111; border-bottom: 0; }
</style>
<div><slot></slot></div><i></i>`;
    }
}
window.customElements.define("gl-combo", GlCombo);

class GlLabel extends HTMLElement {
    connectedCallback() {
        this.root = this.attachShadow({ mode: "open" });
        this.root.innerHTML = `
<style>
:host { display: block; flex: none; box-sizing: border-box; width: ${this.getAttribute("w")}px; padding-left: ${this.getAttribute("pl") || 0}px; color: ${this.getAttribute("c") || "#000"}; }
</style>
<slot></slot>`;
    }
}
window.customElements.define("gl-label", GlLabel);

class GlSpin extends HTMLElement {
    connectedCallback() {
        this.root = this.attachShadow({ mode: "open" });
        this.root.innerHTML = `
<style>
:host { display: flex; align-items: center; flex: none; box-sizing: border-box; width: ${this.getAttribute("w")}px; height: 23px; margin-left: ${this.getAttribute("ml") || 0}px; border: 1px solid #8a8a8a; background: #f8f8f8; color: #777; font-size: 13px; }
div { flex: 1; text-align: right; padding-right: 8px; }
svg { flex: none; margin-right: 2px; }
</style>
<div><slot></slot></div><svg width="9" height="19"><path d="M1.500 5l3-3 3 3M1.500 14l3 3 3-3" fill="none" stroke="#555"/></svg>`;
    }
}
window.customElements.define("gl-spin", GlSpin);

class GlCheck extends HTMLElement {
    connectedCallback() {
        this.root = this.attachShadow({ mode: "open" });
        this.root.innerHTML = `
<style>
:host { display: block; flex: none; width: 11px; height: 11px; border: 1px solid #888; background: #f8f8f8; box-sizing: border-box; }
</style>`;
    }
}
window.customElements.define("gl-check", GlCheck);

class GlWork extends HTMLElement {
    connectedCallback() {
        this.root = this.attachShadow({ mode: "open" });
        this.root.innerHTML = `
<style>
:host { display: flex; height: 624px; margin-top: 4px; }
.left { flex: none; width: 172px; }
.right { flex: none; width: 1194px; padding-left: 6px; box-sizing: border-box; display: flex; flex-direction: column; }
</style>
<div class="left"><slot name="nav"></slot></div>
<div class="right"><slot></slot></div>`;
    }
}
window.customElements.define("gl-work", GlWork);

// mono latin beside cjk, like the simsun of the original
const mono = (text) => text.replace(/[\x20-\x7e]+/g, (m) => `<i class="m">${m}</i>`);
const MONO_CSS = `.m { font: normal 11px "DejaVu Sans Mono", monospace; letter-spacing: -.62px; }`;

class GlNav extends HTMLElement {
    connectedCallback() {
        this.root = this.attachShadow({ mode: "open" });
        this.root.innerHTML = `
<style>
:host { display: flex; flex-direction: column; width: 172px; height: 624px; box-sizing: border-box; }
.head { height: 16px; background: #0a5fd8; color: #fff; display: flex; align-items: center; padding-left: 1px; flex: none; }
.head span { flex: 1; }
.head svg { margin-right: 7px; }
.btn { height: 21px; flex: none; margin: 1px 2px 0 1px; border: 1px solid #a6a6a6; background: linear-gradient(#fafafa, #ececec); display: flex; align-items: center; justify-content: center; box-sizing: border-box; }
.tools { flex: none; height: 26px; margin: 1px 3px 0 1px; display: flex; align-items: center; gap: 7px; padding-left: 5px; background: #fafafa; border: 1px solid #c0c0c0; border-bottom: 0; box-sizing: border-box; }
</style>
<div class="head"><span>模块导航栏</span>
    <svg width="11" height="12"><path d="M3 1h5M4 1v6M7 1v6M1.500 7h8M5.500 7v5" stroke="#fff" fill="none"/></svg>
    <svg width="11" height="12" style="margin-right:5px"><path d="M1.500 2l8 8M9.500 2l-8 8" stroke="#fff"/></svg>
</div>
<div class="btn">工程设置</div>
<div class="btn">绘图输入</div>
<div class="tools"><gl-icon name="plusplus"></gl-icon><gl-icon name="minusminus"></gl-icon></div>
<gl-tree></gl-tree>
<div class="btn" style="margin-top:2px">单构件输入</div>
<div class="btn">报表预览</div>`;
    }
}
window.customElements.define("gl-nav", GlNav);

class GlTree extends HTMLElement {
    connectedCallback() {
        this.root = this.attachShadow({ mode: "open" });
        let rows = [
            [1, "常用构件类型", true], [2, "轴网(J)", "grid"], [2, "筏板基础(M)", "raft"], [2, "框柱(Z)", "col"], [2, "剪力墙(Q)", "wall"],
            [2, "梁(L)", "beam", true], [2, "现浇板(B)", "slab", false, true], [1, "轴线"], [1, "柱", true], [2, "框柱(Z)", "col"], [2, "暗柱(Z)", "col"],
            [2, "端柱(Z)", "col"], [2, "构造柱(Z)", "gzz", false, true], [1, "墙"], [1, "门窗洞"], [1, "梁"], [1, "板"], [1, "基础", true],
            [2, "基础梁(F)", "jcl"], [2, "筏板基础(M)", "raft"], [2, "集水坑(K)", "pit"], [2, "柱墩(Y)", "pier"], [2, "筏板主筋(R)", "rmain"],
            [2, "筏板负筋(X)", "rneg"], [2, "独立基础(P)", "iso"], [2, "条形基础(T)", "strip"], [2, "桩承台(V)", "cap"], [2, "承台梁(F)", "jcl"],
            [2, "桩(U)", "pile"], [2, "基础板带(W)", "band"], [1, ""]
        ];
        let html = rows.map((r) => {
            if (r[0] === 1) {
                return `<div class="row"><svg class="chev" width="10" height="16"><path d="${r[2] ? "M1 6l4 4 4-4" : "M3 4l4 4-4 4"}" fill="none" stroke="${r[2] ? "#444" : "#aaa"}" stroke-width="1.600"/></svg><i class="d1"></i><gl-icon name="${r[2] ? "folderopen" : "folder"}"></gl-icon><span class="t">${mono(r[1])}</span></div>`;
            }
            return `<div class="row lv2"><i class="v1"></i><i class="v2 ${r[4] ? "last" : ""}"></i><i class="h2"></i>${r[3] ? '<i class="selbg"></i>' : ""}<gl-icon class="ic" name="${r[2]}" size="15"></gl-icon><span class="t2">${mono(r[1])}</span></div>`;
        }).join("");
        this.root.innerHTML = `
<style>
:host { display: block; flex: none; position: relative; height: 488px; margin: 0 3px 0 2px; border: 1px solid #a0a0a0; box-sizing: border-box; background: #fff; overflow: hidden; }
${MONO_CSS}
.list { position: absolute; left: 0; top: 1px; width: 148px; }
.row { height: 16px; position: relative; display: flex; align-items: center; padding-left: 9px; white-space: nowrap; }
.chev { flex: none; }
.d1 { width: 4px; margin: 0 1px 0 2px; border-top: 1px dotted #888; flex: none; }
.t { margin-left: 5px; }
.lv2 > i { position: absolute; }
.v1 { left: 12px; top: 0; height: 16px; border-left: 1px dotted #777; }
.v2 { left: 32px; top: 0; height: 16px; border-left: 1px dotted #777; }
.v2.last { height: 8px; }
.h2 { left: 33px; top: 8px; width: 10px; border-top: 1px dotted #777; }
.selbg { left: 40px; top: 0; width: 57px; height: 16px; background: #d4d4d4; }
.ic { position: absolute; left: 43px; top: 0; }
.t2 { position: absolute; left: 63px; top: 0; height: 16px; display: flex; align-items: center; }
.bar { position: absolute; right: 1px; top: 0; width: 15px; bottom: 0; background: #f0f0f0; }
.thumb { position: absolute; left: 0; right: 0; top: 18px; height: 410px; background: #cdcdcd; }
.bar svg { position: absolute; left: 3px; }
</style>
<div class="list">${html}</div>
<div class="bar">
    <svg style="top:5px" width="9" height="7"><path d="M1 6l3.500-4L8 6" fill="none" stroke="#555" stroke-width="1.500"/></svg>
    <div class="thumb"></div>
    <svg style="bottom:5px" width="9" height="7"><path d="M1 1l3.500 4L8 1" fill="none" stroke="#555" stroke-width="1.500"/></svg>
</div>`;
    }
}
window.customElements.define("gl-tree", GlTree);

class GlCanvas extends HTMLElement {
    connectedCallback() {
        this.root = this.attachShadow({ mode: "open" });
        let s = "";
        const rect = (x, y, w, h, fill) => { s += `<rect x="${x}" y="${y}" width="${w}" height="${h}" fill="${fill}"/>`; };
        const line = (x1, y1, x2, y2, c, w) => { s += `<line x1="${x1}" y1="${y1}" x2="${x2}" y2="${y2}" stroke="${c}" stroke-width="${w || 1}"/>`; };
        const poly = (pts, fill) => { s += `<polygon points="${pts}" fill="${fill}"/>`; };
        const text = (x, y, t, c, size, extra) => { s += `<text x="${x}" y="${y}" fill="${c}" font-size="${size}" text-anchor="middle" ${extra || ""}>${t}</text>`; };
        const DARK = "#8f0000", RED = "#e80000", GREEN = "#00e000", YEL = "#f6f600", BLUE = "#0a86ee", NAVY = "#000090", PUR = "#7a10d8", WH = "#fff";

        rect(175, 195, 1191, 278, "#000");
        // hatched slab regions
        rect(176, 195, 1032, 189, "url(#h)");
        rect(405, 384, 430, 89, "url(#h)");
        rect(1087, 392, 163, 40, "url(#h)");
        rect(1226, 311, 24, 81, "url(#h)");
        rect(175, 195, 1, 278, RED);

        // navy edge beam
        rect(770, 385, 459, 7, NAVY);
        rect(1208, 195, 18, 197, NAVY);

        // green beams
        [[176, 4], [319, 9], [467, 9], [613, 14], [764, 9], [912, 9], [1060, 9]].forEach((c) => rect(c[0], 195, c[1], 179, GREEN));
        rect(476, 253, 137, 9, GREEN);
        rect(467, 384, 9, 89, GREEN);
        rect(764, 384, 9, 89, GREEN);
        rect(615, 384, 9, 89, GREEN);

        // yellow beams
        rect(180, 253, 139, 9, YEL);
        rect(190, 427, 118, 10, YEL);
        rect(476, 428, 139, 9, YEL);
        rect(624, 428, 140, 9, YEL);
        rect(615, 432, 9, 5, YEL);
        poly("176,386 186,386 190,428 190,437 187,437", YEL);
        poly("308,437 308,427 313,387 323,387 317,427 312,437", YEL);

        // main beam
        rect(176, 374, 1032, 9.500, BLUE);
        rect(176, 376.500, 1037, 3.500, WH);
        rect(778, 374, 134, 9.500, "#ffff00");
        line(176, 378.200, 768, 378.200, RED, 1.300);
        line(912, 378.200, 1213, 378.200, RED, 1.300);
        rect(606, 374, 6, 8.500, RED);
        rect(627, 374, 7, 8.500, RED);
        rect(690, 374, 8, 3, "#f08020"); rect(690, 377, 8, 3, "#20d0d0"); rect(690, 380, 8, 3.500, "#f08020");

        // column heads
        [[178, "#00d8ff", 12], [315, "#00d8ff", 15], [463, BLUE, 18], [908, "#00c0ff", 17], [1056, "#00d8ff", 18], [1204, BLUE, 16]]
            .forEach((c) => rect(c[0], 369, c[2], 5, c[1]));
        s += `<rect x="759.500" y="364.500" width="19" height="10" fill="${BLUE}" stroke="${PUR}"/>`;
        s += `<rect x="908.500" y="369.500" width="17" height="5" fill="#00c0ff" stroke="${PUR}"/>`;
        [[321, 368], [472, 367], [769, 365], [917, 368], [1065, 367], [1213, 368]].forEach((c) => poly(`${c[0] - 10},384 ${c[0]},${c[1]} ${c[0] + 10},384`, "#ffee00"));
        rect(1209, 374, 8, 9, BLUE);
        rect(463, 384, 18, 2, BLUE);

        // purple joints
        rect(176, 195, 3, 4, PUR); rect(176, 253, 3, 9, PUR); rect(176, 375, 3, 8, PUR); rect(176, 379, 3, 3, BLUE);
        [[467, 428], [764, 428]].forEach((p) => { rect(p[0], p[1], 9, 3.500, PUR); rect(p[0], p[1] + 5, 9, 4, PUR); });
        rect(537, 428, 3, 9, PUR);
        rect(1056, 195, 18, 7, PUR);

        // white dimension and border lines
        line(405, 384, 405, 473, WH, 1.500);
        line(412.500, 380, 412.500, 473, WH, 1.500);
        line(405, 431.500, 468, 431.500, WH, 1.500);
        line(414, 405, 465, 405, WH, 1.500);
        s += `<path d="M419 400l-6 5 6 5" fill="none" stroke="#fff" stroke-width="1.200"/>`;
        line(828, 384, 828, 473, WH, 2);
        line(835.500, 384, 835.500, 473, WH, 1);
        line(775, 405, 827, 405, WH, 2);
        s += `<path d="M822 400l6 5-6 5" fill="none" stroke="#fff" stroke-width="1.200"/>`;
        line(773, 431.500, 835, 431.500, WH, 1.500);
        line(619.500, 433, 580, 473, WH, 1.300);
        line(619.500, 433, 659, 473, WH, 1.300);
        line(619.500, 454, 619.500, 473, WH, 2);
        line(616, 371.500, 632, 371.500, WH, 1);
        line(472.500, 384, 472.500, 429, WH, 1);
        // 3680 dimension
        line(1087.500, 225.500, 1142, 225.500, WH, 2);
        line(1087.500, 391.500, 1142, 391.500, WH, 2);
        line(1134, 225.500, 1134, 391.500, WH, 1.500);
        s += `<path d="M1130 221l8 8M1130 387l8 8" stroke="#fff"/>`;
        line(1213, 195, 1213, 311, WH, 1);
        s += `<path d="M1213 431.500V311.500H1250V431.500H1087.500V392" fill="none" stroke="#fff" stroke-width="1.300"/>`;
        text(1124, 309, "3680", "#d0d0d0", 16, 'transform="rotate(-90 1124 309)" dominant-baseline="middle"');

        // olive block
        rect(883, 398, 67, 68, "#7b7b00");
        rect(927.500, 398, 2, 68, "#b060a0");
        rect(883, 442, 67, 2, "#b060a0");
        poly("909,425 924,439 909,439", PUR);
        line(916, 385, 916, 473, RED, 1.300);

        // axis lines
        [199.500, 226.500, 230.500, 301.500, 391.500].forEach((y) => line(176, y, 1216, y, DARK));
        line(176, 310.500, 1250, 310.500, DARK);
        line(176, 384.500, 1250, 384.500, DARK);
        line(176, 257.500, 1216, 257.500, RED);
        line(176, 432.500, 1250, 432.500, RED, 1.200);
        [190, 308, 315, 318, 340, 391, 394, 398, 438, 539, 835, 880, 1086, 1236, 1240, 1248].forEach((x) => line(x + .5, 195, x + .5, 473, DARK));
        line(321.500, 195, 321.500, 368, DARK);
        line(769, 384, 769, 473, RED);
        line(1065, 385, 1065, 473, RED);
        line(1213, 385, 1213, 473, RED);
        line(233, 195, 478, 440, DARK);
        [310.500, 384.500, 432.500].forEach((y) => line(1250, y, 1319, y, "#008000"));

        // axis bubbles
        [[188, 208, "2", "#999"], [323.500, 208, "3", "#b040c0"], [472, 208, "4", "#b040c0"], [768, 208, "5", "#b040c0"], [916, 208, "6", "#b040c0"], [1065, 208, "7", "#b040c0"], [1213, 208, "8", "#ccc"],
            [188, 258, "C", "#999"], [188, 378, "B", "#a07080"], [188, 432, "A", "#aaa"]].forEach((b) => {
            s += `<circle cx="${b[0]}" cy="${b[1]}" r="12.500" fill="none" stroke="#008000"/>`;
            text(b[0], b[1] + 5, b[2], b[3], 15, 'font-weight="bold"');
        });

        // ucs arrows
        rect(228.500, 382, 3, 41, GREEN);
        poly("230,373 226,384 234,384", GREEN);
        rect(230, 421, 38, 3.500, RED);
        poly("279,422.500 267,418 267,427", RED);
        s += `<path d="M267 403l8 8M275 403l-8 8" stroke="#d00" stroke-width=".8"/><path d="M240 377l4 4 4-4M244 381v6" fill="none" stroke="#00a000"/>`;

        // angle marker
        s += `<path d="M517 418v17M517 435l-5 5-9 18 -1 5 8 8" fill="none" stroke="#008000"/>`;
        text(512, 453, "45°", "#a8a8a8", 16, 'font-weight="bold"');

        // small labels
        [[451, 363, "3020"], [488, 363, "3020"], [747, 363, "3020"], [784, 363, "3020"], [840, 363, "3025"], [238, 390, "2014(A) 01 00/150 (2)"],
            [389, 390, "2014(C) 80 00 (1)"], [615, 390, "3020/3022"], [840, 390, "2014"], [989, 390, "2014"], [1134, 390, "2014"]]
            .forEach((t) => text(t[0], t[1], t[2], "#b0b0b0", 7));

        this.root.innerHTML = `
<style>
:host { display: block; flex: none; width: 1191px; margin: 4px 0 0 -3px; height: 278px; position: relative; }
svg { display: block; }
text { font-family: "Liberation Sans", sans-serif; }
.tip { position: absolute; left: 5px; top: 15px; width: 47px; height: 20px; border-radius: 2px; background: #f0f0f0; box-shadow: 0 1px 0 #fff; }
</style>
<svg width="1191" height="278" viewBox="175 195 1191 278" shape-rendering="crispEdges">
<defs><pattern id="h" width="23" height="20" patternUnits="userSpaceOnUse"><path d="M-1 20.900L24 -.9" stroke="#bcbcbc" stroke-width=".8"/></pattern></defs>
${s}
</svg>
<div class="tip"></div>`;
    }
}
window.customElements.define("gl-canvas", GlCanvas);

class GlPanel extends HTMLElement {
    connectedCallback() {
        this.root = this.attachShadow({ mode: "open" });
        this.root.innerHTML = `
<style>
:host { display: flex; flex: none; margin: 5px 0 0 -3px; height: 202px; width: 1191px; }
.side { flex: none; width: 12px; padding-top: 1px; }
.side svg { display: block; margin-left: 1px; }
.side div { height: 175px; margin: 6px 0 0 2px; width: 6px; background: radial-gradient(circle, #c0c0c0 1px, transparent 1.200px) 0 0 / 3px 4px; }
.main { flex: 1; display: flex; flex-direction: column; padding-top: 2px; }
.bar { flex: none; height: 25px; margin-bottom: 1px; display: flex; align-items: center; padding-left: 6px; background: linear-gradient(#fff, #eee); white-space: nowrap; }
.bar span { margin-right: 10px; }
.bar gl-icon { margin: 0 3px 0 0; }
.off { color: #aaa; }
</style>
<div class="side">
    <svg width="11" height="11"><rect x=".5" y=".5" width="10" height="10" fill="#eee" stroke="#666"/><path d="M2 2l7 7M9 2L2 9" stroke="#a33"/></svg>
    <div></div>
</div>
<div class="main">
    <div class="bar">
        <gl-icon name="copyx"></gl-icon><span style="margin-right:5px">复制跨数据</span>
        <gl-icon name="pastex"></gl-icon><span class="off" style="margin:0 9px 0 3px">粘贴跨数据</span>
        <span>输入当前列数据</span><span>删除当前列数据</span><span>页面设置</span><span>调换起始跨</span><span>悬臂钢筋代号</span>
    </div>
    <gl-datagrid></gl-datagrid>
</div>`;
    }
}
window.customElements.define("gl-panel", GlPanel);

class GlDatagrid extends HTMLElement {
    connectedCallback() {
        this.root = this.attachShadow({ mode: "open" });
        let widths = [30, 41, 41, 41, 41, 41, 41, 60, 82, 81, 81, 81, 81, 81, 81, 81, 101, 70];
        let secs = ["(200*600)"];
        const span = (n, l, a1, a2, a3, len, dist, top, left, mid, right, bot, sideA) =>
            [n, l, a1, a2, a3, "", len, secs[0], dist, top, left, mid, right, "", bot, sideA, "", "(中6)"];
        let rows = [
            span("1", "1", "(100)", "(300)", "(200)", "(3300)", "200", "2虫20", "", "3虫20", "", "2虫14", "N4虫12"),
            span("2", "2", "", "(200)", "(200)", "(3300)", "(100)", "", "", "", "", "2虫14", ""),
            span("3", "3", "", "(200)", "(200)", "(3300)", "(100)", "", "", "", "3虫20", "2虫14", ""),
            span("4", "4", "", "(200)", "(200)", "(6600)", "(100)", "", "3虫20", "", "3虫20", "2虫20/3虫22", ""),
            span("5", "5", "", "(200)", "(200)", "(3300)", "(100)", "", "3虫20", "2虫25", "", "2虫14", ""),
            span("6", "6", "", "(200)", "(200)", "(3300)", "(100)", "", "", "", "", "2虫14", "")
        ];
        let body = rows.map((r, ri) => `<tr class="${ri === 4 ? "cur" : ""}">${r.map((c, i) => {
            if (i === 0) {
                return `<th class="rh">${mono(c)}</th>`;
            }
            return `<td class="${i === 2 ? "a1" : ""}${ri === 4 && i === 12 ? " selc" : ""}">${mono(c)}</td>`;
        }).join("")}</tr>`).join("");
        this.root.innerHTML = `
<style>
:host { display: grid; grid-template-columns: 1157px 16px; grid-template-rows: 151px 17px; flex: none; width: 1177px; height: 173px; margin-top: 0; box-sizing: border-box; padding: 1px 2px 0 1px; border: 1px solid #b4b4b4; border-bottom: 2px solid #b4b4b4; background: #fff; position: relative; }
${MONO_CSS}
table { border-collapse: collapse; table-layout: fixed; width: 1157px; }
th, td { padding: 0; height: 19px; box-sizing: border-box; border: 1px solid #c4c4c4; font-weight: normal; overflow: hidden; white-space: nowrap; }
tr.h1 th { height: 18px; }
thead th { background: linear-gradient(#fefefe, #eee); text-align: center; }
th.rh { background: #f4f4f4; text-align: center; }
td { padding-left: 2px; background: #fff; }
td.a1 { border-left: 1px solid #000; }
tr.cur td { background: #a6c9ee; }
tr.cur th.rh { background: #ffd98e; color: #5b0a8a; }
thead th.hot { background: linear-gradient(#fbdc9b, #f6c05f); color: #5b0a8a; }
tr.cur td.selc { background: #8ab9ea; box-shadow: inset 0 0 0 2px #000, 0 0 0 1px #000; position: relative; z-index: 1; }
.vb { background: #f0f0f0; position: relative; }
.vb .th { position: absolute; left: 0; right: 0; top: 17px; height: 65px; background: #cdcdcd; }
.hb { background: #f0f0f0; position: relative; margin-top: 2px; height: 15px; }
.hb .th { position: absolute; left: 96px; width: 535px; top: 0; bottom: 0; background: #cdcdcd; }
svg { position: absolute; }
.handle { position: absolute; z-index: 2; left: 742px; top: 132px; width: 4px; height: 4px; background: #777; border: 1px solid #fff; }
.marks { position: absolute; left: 0; top: 0; overflow: visible; pointer-events: none; z-index: 3; }
.marks text { font: bold 20.500px "Liberation Sans", sans-serif; }
</style>
<table>
<colgroup>${widths.map((w) => `<col style="width:${w}px">`).join("")}</colgroup>
<thead>
<tr class="h1"><th rowspan="2"></th><th rowspan="2">跨号</th><th colspan="7">${mono("构件尺寸(mm)")}</th><th rowspan="2">上通长筋</th><th colspan="3">上部钢筋</th><th colspan="2">下部钢筋</th><th colspan="3">侧面钢筋</th></tr>
<tr><th>${mono("A1")}</th><th>${mono("A2")}</th><th>${mono("A3")}</th><th>${mono("A4")}</th><th>跨长</th><th>${mono("截面(B*H)")}</th><th>距左边线距离</th><th>左支座钢筋</th><th>跨中钢筋</th><th class="hot">右支座钢筋</th><th>下通长筋</th><th>下部钢筋</th><th>侧面通长筋</th><th>侧面原位标注筋</th><th>拉筋</th></tr>
</thead>
<tbody>${body}</tbody>
</table>
<div class="vb">
    <svg style="left:3px;top:5px" width="10" height="7"><path d="M1 6l4-4 4 4" fill="none" stroke="#555" stroke-width="1.500"/></svg>
    <div class="th"></div>
    <svg style="left:3px;bottom:5px" width="10" height="7"><path d="M1 1l4 4 4-4" fill="none" stroke="#555" stroke-width="1.500"/></svg>
</div>
<div class="hb">
    <svg style="left:5px;top:3px" width="7" height="10"><path d="M6 1L2 5l4 4" fill="none" stroke="#555" stroke-width="1.500"/></svg>
    <div class="th"></div>
    <svg style="right:5px;top:3px" width="7" height="10"><path d="M1 1l4 4-4 4" fill="none" stroke="#555" stroke-width="1.500"/></svg>
</div>
<div class="handle"></div>
<svg class="marks" width="1177" height="170">
    <ellipse cx="519" cy="132" rx="51" ry="19" fill="none" stroke="#f00" stroke-width="2.500"/>
    <ellipse cx="602" cy="123" rx="33" ry="22" fill="none" stroke="#f00" stroke-width="2.500"/>
    <text x="476" y="135" fill="#f00">3c25</text>
</svg>`;
    }
}
window.customElements.define("gl-datagrid", GlDatagrid);

class GlStatusbar extends HTMLElement {
    connectedCallback() {
        this.root = this.attachShadow({ mode: "open" });
        let cells = [["X=24334 Y=8679", 146], ["层高:4.5m", 78], ["底标高:-0.05m", 98], ["1(1)", 48], ["按鼠标左键指定第一个角点，或拾取构件图元", 913], ["330.9 FPS", 66]];
        this.root.innerHTML = `
<style>
:host { display: flex; gap: 2px; height: 20px; background: #f0f0f0; padding-left: 1px; box-sizing: border-box; }
${MONO_CSS}
div { flex: none; box-sizing: border-box; height: 19px; border: 1px solid #dcdcdc; background: #f8f8f8; padding-left: 1px; line-height: 17px; white-space: nowrap; overflow: hidden; }
</style>
${cells.map((c) => `<div style="width:${c[1]}px">${mono(c[0])}</div>`).join("")}`;
    }
}
window.customElements.define("gl-statusbar", GlStatusbar);

class GlTaskbar extends HTMLElement {
    connectedCallback() {
        this.root = this.attachShadow({ mode: "open" });
        this.root.innerHTML = `
<style>
:host { display: flex; align-items: center; height: 40px; background: #0a1014; color: #fff; position: relative; }
.start { flex: none; width: 48px; height: 100%; background: #000; display: flex; align-items: center; justify-content: center; }
.search { flex: none; width: 344px; height: 100%; background: #333; display: flex; align-items: center; color: #8c8c8c; font-size: 14px; box-sizing: border-box; padding-left: 11px; position: relative; }
.search svg:first-child { margin-right: 6px; }
.search .mic { position: absolute; right: 14px; top: 11px; }
.app { flex: none; height: 100%; display: flex; align-items: center; justify-content: center; box-sizing: border-box; position: relative; }
.app.run::after { content: ""; position: absolute; left: 0; right: 0; bottom: 0; height: 2px; background: #76b9ed; }
.app.act { background: #3a4248; }
.tray { flex: none; display: flex; align-items: center; position: absolute; top: 0; height: 100%; }
.c { text-align: center; line-height: 18px; color: #ddd; white-space: nowrap; }
</style>
<div class="start"><svg width="18" height="18" viewBox="0 0 18 18"><path d="M0 2.500L7.500 1.500v7H0zM8.500 1.300L18 0v8.500H8.500zM0 9.500h7.500v7L0 15.500zM8.500 9.500H18V18l-9.500-1.300z" fill="#fff"/></svg></div>
<div class="search">
    <svg width="20" height="20" viewBox="0 0 20 20"><circle cx="10" cy="10" r="8" fill="none" stroke="#e8e8e8" stroke-width="2.500"/></svg>
    <span>在这里输入你要搜索的内容</span>
    <svg class="mic" width="12" height="18" viewBox="0 0 12 18"><rect x="3.500" y="1" width="5" height="10" rx="2.500" fill="none" stroke="#888"/><path d="M1 8c0 6 10 6 10 0M6 13v4M3 17h6" fill="none" stroke="#888"/></svg>
</div>
<div class="app" style="width:48px"><svg width="20" height="18" viewBox="0 0 20 18"><rect x="5" y="1" width="10" height="16" fill="none" stroke="#fff" stroke-width="1.400"/><path d="M3 4H1v10h2M17 4h2v10h-2" fill="none" stroke="#fff"/></svg></div>
<div class="app" style="width:51px"><svg width="24" height="24" viewBox="0 0 24 24"><g fill="#e8e8e8"><path d="M12 11C6 12 2 9 3 5c1-4 7-4 9-1 2-3 8-3 9 1 1 4-3 7-9 6z"/><path d="M12 13c-6-1-10 2-9 6 1 4 7 4 9 1 2 3 8 3 9-1 1-4-3-7-9-6z"/></g><circle cx="12" cy="12" r="2" fill="#0a1014"/></svg></div>
<div class="app" style="width:52px"><svg width="26" height="26" viewBox="0 0 26 26"><circle cx="13" cy="14" r="7.500" fill="none" stroke="#eee" stroke-width="3"/><path d="M6 13h14" stroke="#eee" stroke-width="2.500"/><path d="M3 21C1 12 14 0 23 3" fill="none" stroke="#ccc" stroke-width="1.500"/></svg></div>
<div class="app" style="width:50px"><svg width="30" height="30" viewBox="0 0 30 30"><path d="M12 22a7 7 0 1 1 7-9c-1-3-8-3-9 1 0 4 6 5 7 1" fill="none" stroke="#bbb" stroke-width="1.500"/><path d="M18 16c0-5 1-9 4-9s4 4 4 9l2 2H16z" fill="#f0b014"/></svg></div>
<div class="app" style="width:50px"><svg width="28" height="28" viewBox="0 0 28 28"><path d="M4 13C5 6 10 3 15 3c6 0 10 5 10 11H10c0 5 8 7 13 3v6c-5 3-13 2-16-2-2-2-3-5-3-8z" fill="#0f7ad6"/></svg></div>
<div class="app" style="width:48px"><svg width="28" height="28" viewBox="0 0 28 28"><circle cx="14" cy="15" r="10" fill="none" stroke="#28a1ef" stroke-width="4"/><path d="M5 14h18" stroke="#28a1ef" stroke-width="3"/><path d="M3 24C1 14 16 0 26 3c2 2-1 6-3 8" fill="none" stroke="#f0c020" stroke-width="2"/></svg></div>
<div class="app" style="width:52px"><svg width="24" height="22" viewBox="0 0 24 22"><path d="M1 3h9l2 3h11v15H1z" fill="#f8d67a"/><path d="M7 10h10v11H7z" fill="#3aa3dc"/><path d="M10 13h4v8h-4z" fill="#f8d67a"/></svg></div>
<div class="app act run" style="width:48px"><svg width="24" height="24" viewBox="0 0 24 24"><rect width="24" height="24" rx="4" fill="#1b9af0"/><path d="M12 4v11a3 3 0 0 1-3 3M5 10h14M8 6c-3 1-4 4-3 7M16 6c3 1 4 4 3 7" stroke="#fff" stroke-width="2" fill="none"/></svg></div>
<div class="app run" style="width:40px;margin-left:5px"><svg width="24" height="30" viewBox="0 0 24 30"><path d="M21 3C10 3 2 10 2 19s8 9 12 6c4-3 5-8 1-10-3-1-6 1-5 4" fill="none" stroke="#1f8de6" stroke-width="5"/></svg></div>
<div class="app run" style="width:40px;margin-left:9px"><svg width="24" height="28" viewBox="0 0 24 28"><circle cx="12" cy="15" r="10" fill="#7ac943"/><path d="M5 14h14M12 8a6 6 0 1 0 6 9" stroke="#fff" stroke-width="2.500" fill="none"/><path d="M4 25c5 3 13 3 16-1M8 4c5-3 10-3 12 0" stroke="#3a8f20" fill="none"/></svg></div>
<div class="tray c" style="left:949px;width:24px">链接</div>
<div class="tray c" style="left:986px;width:60px;display:block;padding-top:2px">39%<br>CPU使用</div>
<div class="tray" style="left:1060px"><svg width="12" height="8"><path d="M1 7l5-5 5 5" fill="none" stroke="#fff" stroke-width="1.300"/></svg></div>
<div class="tray" style="left:1082px"><svg width="16" height="16" viewBox="0 0 16 16"><path d="M1 2v3M4 2v3M0 5h6v2l-2 2H2L0 7zM3 9v2h1" fill="#fff" stroke="#fff" stroke-width=".8"/><rect x="4" y="6" width="11" height="8" fill="none" stroke="#fff"/><rect x="5" y="7" width="7" height="6" fill="#fff"/></svg></div>
<div class="tray" style="left:1108px"><svg width="16" height="16" viewBox="0 0 16 16"><path d="M2 13c1-6 5-10 12-11M5 14c1-4 3-7 8-8M8 14c.5-2 2-4 5-4" fill="none" stroke="#ccc" stroke-dasharray="2 1"/><circle cx="12" cy="14" r="1.200" fill="#fff"/></svg></div>
<div class="tray" style="left:1130px"><svg width="16" height="16" viewBox="0 0 16 16"><path d="M1 6h3l3-3v10l-3-3H1zM10 5c1.500 2 1.500 4 0 6M12.500 3c2.500 3 2.500 7 0 10" fill="none" stroke="#ddd"/></svg></div>
<div class="tray" style="left:1154px"><svg width="23" height="16" viewBox="0 0 23 16"><rect x=".5" y=".5" width="22" height="15" fill="none" stroke="#fff"/><path d="M3 4h17M3 7h17M5 11h13" stroke="#fff" stroke-dasharray="1.500 1"/></svg></div>
<div class="tray c" style="left:1186px;font-size:14px;color:#fff;font-weight:bold">中</div>
<div class="tray" style="left:1213px"><div style="width:15px;height:17px;background:#ef5a1f;border-radius:3px;color:#fff;font:bold 15px/17px 'Liberation Sans',sans-serif;text-align:center;transform:rotate(-6deg)">S</div></div>
<div class="tray c" style="left:1241px;width:72px;display:block;padding-top:2px;color:#fff">15:00<br>2018/3/25</div>
<div class="tray" style="left:1325px"><svg width="16" height="18" viewBox="0 0 16 18"><path d="M.5.500h15v12H10l-2.500 3-1-3H.5z" fill="none" stroke="#fff"/></svg></div>`;
    }
}
window.customElements.define("gl-taskbar", GlTaskbar);
</script>
</body>
</html>
